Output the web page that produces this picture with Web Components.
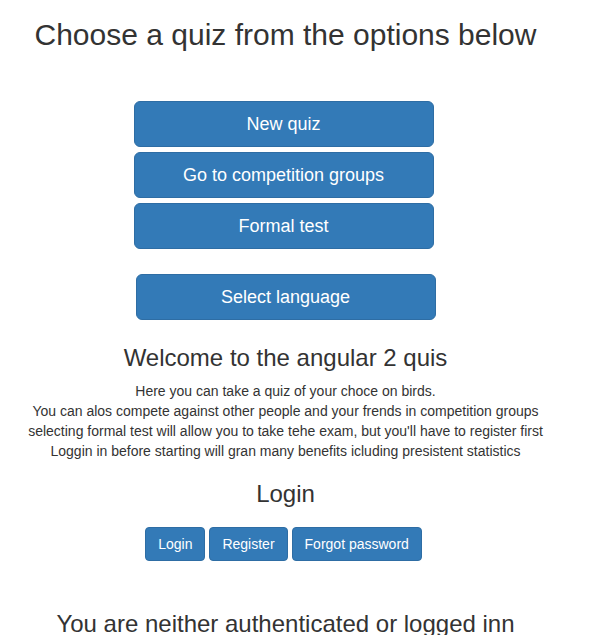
<!DOCTYPE html>
<html lang="en">
<head>
<meta charset="utf-8">
<title>Bird quiz</title>
<style>
html, body { margin: 0; background: #fff; }
body { font: 14px/20px "Liberation Sans", Arial, sans-serif; color: #333; }
</style>
</head>
<body>
<quiz-page></quiz-page>
<script>
class QuizButton extends HTMLElement {
  constructor() {
    super();
    this.attachShadow({ mode: "open" }).innerHTML = `
<style>
:host { display: inline-block; }
:host([size="large"]) { display: block; width: 300px; max-width: 100%; }
button { display: block; width: 100%; margin: 0; box-sizing: border-box; font: inherit; font-size: 14px; line-height: 20px; padding: 6px 12px; color: #fff; background: #337ab7; border: 1px solid #2e6da4; border-radius: 4px; cursor: pointer; white-space: nowrap; }
:host([size="large"]) button { font-size: 18px; line-height: 24px; padding: 10px 16px; border-radius: 6px; }
button:hover { background: #286090; }
</style>
<button type="button"><slot></slot></button>`;
  }
}
customElements.define("quiz-button", QuizButton);

class QuizMenu extends HTMLElement {
  constructor() {
    super();
    this.attachShadow({ mode: "open" }).innerHTML = `
<style>
:host { display: flex; flex-direction: column; align-items: center; gap: 5px; }
</style>
<slot></slot>`;
  }
}
customElements.define("quiz-menu", QuizMenu);

class QuizSection extends HTMLElement {
  constructor() {
    super();
    this.attachShadow({ mode: "open" }).innerHTML = `
<style>
:host { display: block; text-align: center; }
h2 { margin: 0 0 10px; font-size: 24px; line-height: 26px; font-weight: 500; }
</style>
<h2><slot name="heading"></slot></h2>
<slot></slot>`;
  }
}
customElements.define("quiz-section", QuizSection);

class QuizPage extends HTMLElement {
  constructor() {
    super();
    this.attachShadow({ mode: "open" }).innerHTML = `
<style>
:host { display: block; height: 100vh; overflow: hidden; box-sizing: border-box; padding: 18px 36px 0 0; }
main { text-align: center; }
h1 { margin: 0 0 50px; font-size: 30px; line-height: 33px; font-weight: 500; }
.choices { padding-right: 4px; }
.language { margin: 25px 0; }
p { margin: 0; }
.intro { margin-bottom: 20px; }
.actions { display: flex; justify-content: center; gap: 4px; padding: 10px 4px 0 0; margin-bottom: 50px; }
</style>
<main>
  <h1>Choose a quiz from the options below</h1>
  <quiz-menu class="choices">
    <quiz-button size="large">New quiz</quiz-button>
    <quiz-button size="large">Go to competition groups</quiz-button>
    <quiz-button size="large">Formal test</quiz-button>
  </quiz-menu>
  <quiz-menu class="language">
    <quiz-button size="large">Select language</quiz-button>
  </quiz-menu>
  <quiz-section class="intro">
    <span slot="heading">Welcome to the angular 2 quis</span>
    <p>Here you can take a quiz of your choce on birds.</p>
    <p>You can alos compete against other people and your frends in competition groups</p>
    <p>selecting formal test will allow you to take tehe exam, but you'll have to register first</p>
    <p>Loggin in before starting will gran many benefits icluding presistent statistics</p>
  </quiz-section>
  <quiz-section>
    <span slot="heading">Login</span>
    <div class="actions">
      <quiz-button>Login</quiz-button>
      <quiz-button>Register</quiz-button>
      <quiz-button>Forgot password</quiz-button>
    </div>
  </quiz-section>
  <quiz-section>
    <span slot="heading">You are neither authenticated or logged inn</span>
  </quiz-section>
</main>`;
  }
}
customElements.define("quiz-page", QuizPage);
</script>
</body>
</html>
